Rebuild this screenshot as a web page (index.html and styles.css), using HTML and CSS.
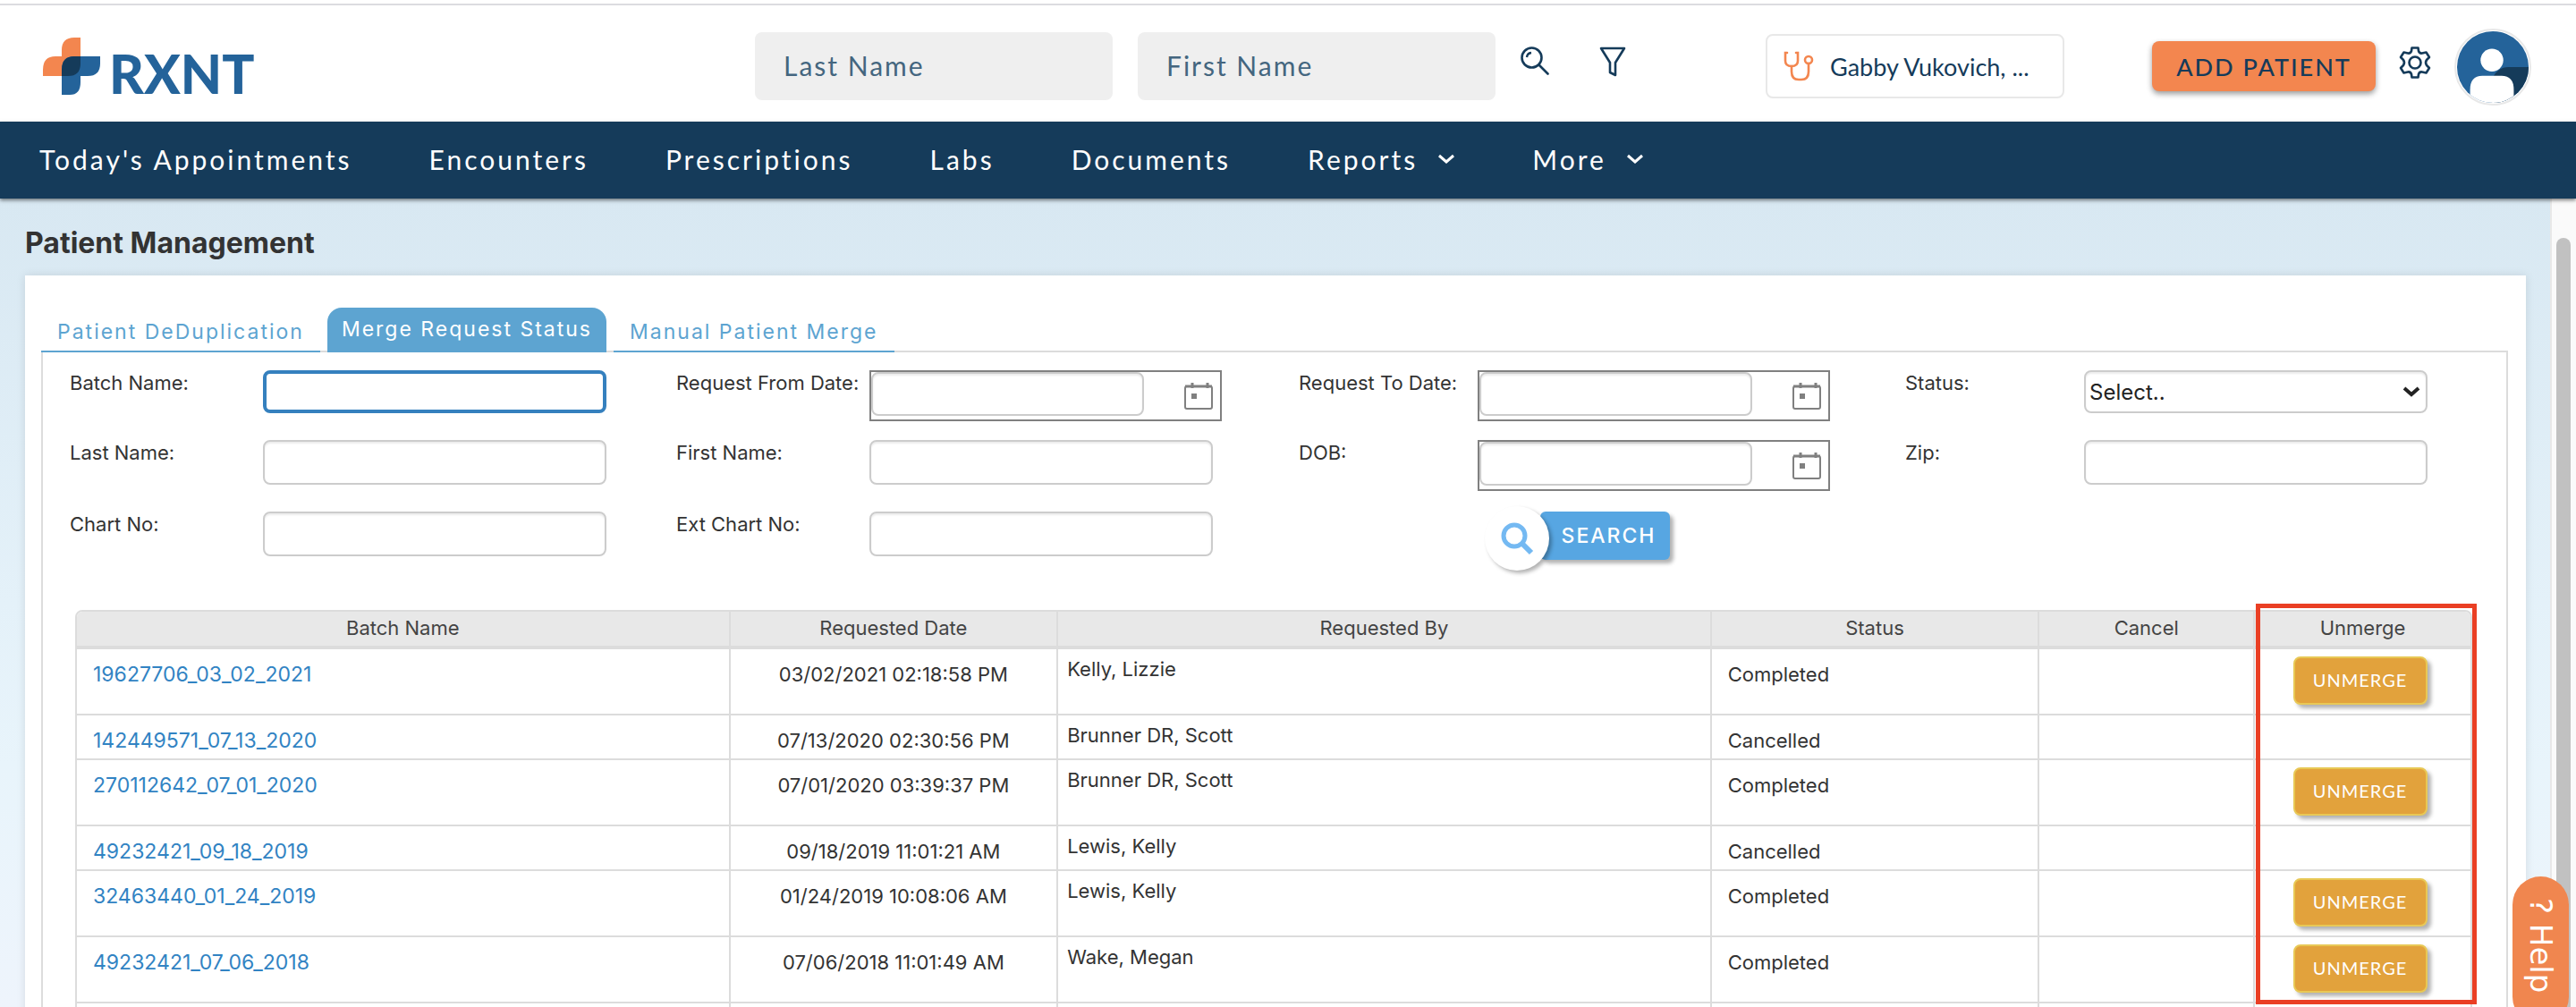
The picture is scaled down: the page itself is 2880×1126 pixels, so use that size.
FILE: index.html
```html
<!DOCTYPE html>
<html lang="en">
<head>
  <meta charset="UTF-8" />
  <meta name="viewport" content="width=device-width, initial-scale=1.0"/>
  <title>Patient Management</title>
  <link rel="stylesheet" href="styles.css">
</head>
<body>
  <!-- Top bar -->
  <header class="topbar">
    <a class="logo" href="#" aria-label="RXNT home">
      <svg class="logo-mark" viewBox="0 0 64 64">
        <path d="M21 21V14Q21 0 35 0H42V29Q42 43 28 43H0V36Q0 21 14 21Z" fill="#f3864f"/>
        <path d="M64 21V29Q64 43 50 43H42V50Q42 64 30 64H21V36Q21 21 35 21Z" fill="#24639a"/>
        <path d="M42 21V29Q42 43 28 43H21V36Q21 21 35 21Z" fill="#153b5a"/>
      </svg>
      <span class="logo-text">RXNT</span>
    </a>

    <form class="quick-search">
      <input type="text" placeholder="Last Name" aria-label="Last Name" />
      <input type="text" placeholder="First Name" aria-label="First Name" />
      <button type="button" class="icon-button" aria-label="Search">
        <svg width="32" height="32" viewBox="0 0 32 32" fill="none" stroke="#153b5a" stroke-width="2.6">
          <circle cx="12.5" cy="12.5" r="11"/>
          <path d="M20.5 20.5L30.5 30.5" stroke-linecap="round"/>
          <path d="M7 12Q7.500 7.500 12 7" stroke-width="2.4"/>
        </svg>
      </button>
      <button type="button" class="icon-button" aria-label="Filter">
        <svg width="30" height="34" viewBox="0 0 30 34" fill="none" stroke="#153b5a" stroke-width="2.6" stroke-linejoin="round">
          <path d="M2 2H28L18 18V32L12 29V18Z"/>
        </svg>
      </button>
    </form>

    <button type="button" class="provider">
      <svg width="34" height="34" viewBox="0 0 34 34" fill="none" stroke="#f3864f" stroke-width="2.6" stroke-linecap="round">
        <path d="M4 2H2V11Q2 17 9 17T16 11V2H14"/>
        <path d="M9 17V23Q9 32 17 32H20Q28 32 28 23V14"/>
        <circle cx="28" cy="10" r="4"/>
      </svg>
      <span>Gabby Vukovich, ...</span>
    </button>

    <button type="button" class="add-patient">ADD PATIENT</button>

    <button type="button" class="icon-button gear" aria-label="Settings">
      <svg width="36" height="36" viewBox="0 0 36 36" fill="none" stroke="#153b5a" stroke-width="2.6" stroke-linejoin="round">
        <path d="M14.500 1.500H21.500L22 5Q23 8 26 7.500L30.500 6.500L34 12L31 15Q29 18 31 21L34 24L30.500 29.500L26 28.500Q23 28 22 31L21.500 34.500H14.500L14 31Q13 28 10 28.500L5.500 29.500L2 24L5 21Q7 18 5 15L2 12L5.500 6.500L10 7.500Q13 8 14 5Z"/>
        <circle cx="18" cy="18" r="6.500"/>
      </svg>
    </button>

    <a class="avatar" href="#" aria-label="My account">
      <svg viewBox="0 0 84 84">
        <defs><clipPath id="face"><circle cx="42" cy="42" r="41"/></clipPath></defs>
        <g clip-path="url(#face)">
          <rect width="84" height="84" fill="#24639a"/>
          <path d="M40 58Q46 42 60 42H84V84H40Z" fill="#153b5a"/>
          <path d="M16 84V68Q16 52 30 52H52Q66 52 66 68V84Z" fill="#fff"/>
          <circle cx="41" cy="34" r="13" fill="#fff"/>
        </g>
      </svg>
    </a>
  </header>

  <!-- Main navigation -->
  <nav class="mainnav">
    <a href="#">Today's Appointments</a>
    <a href="#">Encounters</a>
    <a href="#">Prescriptions</a>
    <a href="#">Labs</a>
    <a href="#">Documents</a>
    <a href="#">Reports
      <svg class="chevron" viewBox="0 0 20 12"><path d="M2 2L10 9L18 2"/></svg>
    </a>
    <a href="#">More
      <svg class="chevron" viewBox="0 0 20 12"><path d="M2 2L10 9L18 2"/></svg>
    </a>
  </nav>

  <div class="page">
    <main class="content">
      <h1>Patient Management</h1>

      <section class="panel">
        <div class="tabs">
          <button type="button" class="tab">Patient DeDuplication</button>
          <button type="button" class="tab active">Merge Request Status</button>
          <button type="button" class="tab">Manual Patient Merge</button>
        </div>

        <div class="tab-body">
          <!-- Search form -->
          <form class="filters">
            <div class="field">
              <label for="batchName">Batch Name:</label>
              <input type="text" id="batchName" class="focused" />
            </div>
            <div class="field">
              <label for="fromDate">Request From Date:</label>
              <span class="date-box">
                <input type="text" id="fromDate" />
                <svg class="calendar" viewBox="0 0 32 32"><path d="M3 6H29Q31 6 31 8V29Q31 31 29 31H3Q1 31 1 29V8Q1 6 3 6Z"/><path d="M1 6H31M9 2V8M26 2V8" class="thick"/><rect x="8" y="14" width="6" height="6"/></svg>
              </span>
            </div>
            <div class="field narrow">
              <label for="toDate">Request To Date:</label>
              <span class="date-box">
                <input type="text" id="toDate" />
                <svg class="calendar" viewBox="0 0 32 32"><path d="M3 6H29Q31 6 31 8V29Q31 31 29 31H3Q1 31 1 29V8Q1 6 3 6Z"/><path d="M1 6H31M9 2V8M26 2V8" class="thick"/><rect x="8" y="14" width="6" height="6"/></svg>
              </span>
            </div>
            <div class="field narrow">
              <label for="status">Status:</label>
              <span class="select-box">
                <select id="status">
                  <option>Select..</option>
                </select>
                <svg class="select-arrow" viewBox="0 0 20 12"><path d="M2 2L10 9L18 2"/></svg>
              </span>
            </div>

            <div class="field">
              <label for="lastName">Last Name:</label>
              <input type="text" id="lastName" />
            </div>
            <div class="field">
              <label for="firstName">First Name:</label>
              <input type="text" id="firstName" />
            </div>
            <div class="field narrow">
              <label for="dob">DOB:</label>
              <span class="date-box">
                <input type="text" id="dob" />
                <svg class="calendar" viewBox="0 0 32 32"><path d="M3 6H29Q31 6 31 8V29Q31 31 29 31H3Q1 31 1 29V8Q1 6 3 6Z"/><path d="M1 6H31M9 2V8M26 2V8" class="thick"/><rect x="8" y="14" width="6" height="6"/></svg>
              </span>
            </div>
            <div class="field narrow">
              <label for="zip">Zip:</label>
              <input type="text" id="zip" />
            </div>

            <div class="field">
              <label for="chartNo">Chart No:</label>
              <input type="text" id="chartNo" />
            </div>
            <div class="field">
              <label for="extChartNo">Ext Chart No:</label>
              <input type="text" id="extChartNo" />
            </div>
            <div class="field search-cell">
              <button type="button" class="search-button">
                <span class="search-circle">
                  <svg width="38" height="38" viewBox="0 0 38 38" fill="none" stroke="#74b9f2" stroke-width="5">
                    <circle cx="16" cy="16" r="12"/>
                    <path d="M25 25L35 35" stroke-width="6"/>
                  </svg>
                </span>
                SEARCH
              </button>
            </div>
          </form>

          <!-- Results -->
          <div class="results">
            <table>
              <thead>
                <tr>
                  <th class="wide">Batch Name</th>
                  <th class="medium">Requested Date</th>
                  <th class="wide">Requested By</th>
                  <th class="medium">Status</th>
                  <th>Cancel</th>
                  <th>Unmerge</th>
                </tr>
              </thead>
              <tbody>
                <tr>
                  <td><a href="#">19627706_03_02_2021</a></td>
                  <td class="date">03/02/2021 02:18:58 PM</td>
                  <td class="by">Kelly, Lizzie</td>
                  <td>Completed</td>
                  <td></td>
                  <td class="action"><button type="button" class="unmerge">UNMERGE</button></td>
                </tr>
                <tr>
                  <td><a href="#">142449571_07_13_2020</a></td>
                  <td class="date">07/13/2020 02:30:56 PM</td>
                  <td class="by">Brunner DR, Scott</td>
                  <td>Cancelled</td>
                  <td></td>
                  <td class="action"></td>
                </tr>
                <tr>
                  <td><a href="#">270112642_07_01_2020</a></td>
                  <td class="date">07/01/2020 03:39:37 PM</td>
                  <td class="by">Brunner DR, Scott</td>
                  <td>Completed</td>
                  <td></td>
                  <td class="action"><button type="button" class="unmerge">UNMERGE</button></td>
                </tr>
                <tr>
                  <td><a href="#">49232421_09_18_2019</a></td>
                  <td class="date">09/18/2019 11:01:21 AM</td>
                  <td class="by">Lewis, Kelly</td>
                  <td>Cancelled</td>
                  <td></td>
                  <td class="action"></td>
                </tr>
                <tr>
                  <td><a href="#">32463440_01_24_2019</a></td>
                  <td class="date">01/24/2019 10:08:06 AM</td>
                  <td class="by">Lewis, Kelly</td>
                  <td>Completed</td>
                  <td></td>
                  <td class="action"><button type="button" class="unmerge">UNMERGE</button></td>
                </tr>
                <tr>
                  <td><a href="#">49232421_07_06_2018</a></td>
                  <td class="date">07/06/2018 11:01:49 AM</td>
                  <td class="by">Wake, Megan</td>
                  <td>Completed</td>
                  <td></td>
                  <td class="action"><button type="button" class="unmerge">UNMERGE</button></td>
                </tr>
                <tr>
                  <td></td>
                  <td></td>
                  <td></td>
                  <td></td>
                  <td></td>
                  <td></td>
                </tr>
              </tbody>
            </table>
            <div class="highlight"></div>
          </div>
        </div>
      </section>
    </main>
    <div class="scrollbar"><div class="thumb"></div></div>
  </div>

  <button type="button" class="help">? Help</button>
</body>
</html>
```
FILE: styles.css
```css
* {
  box-sizing: border-box;
}
body {
  margin: 0;
  height: 100vh;
  display: flex;
  flex-direction: column;
  overflow: hidden;
  font-family: Inter, "Liberation Sans", sans-serif;
  font-size: 22px;
  line-height: 30px;
  color: #333;
  background-color: #fff;
}
button, input, select {
  font-family: inherit;
}
button {
  padding: 0;
  border: none;
  background: none;
  cursor: pointer;
}
svg {
  display: block;
  flex: none;
}

/* top bar */
.topbar {
  display: flex;
  align-items: flex-start;
  flex: none;
  height: 132px;
  margin-top: 4px;
  padding: 30px 50px 0 48px;
  border-top: 2px solid #dcdce0;
  font-family: Lato, sans-serif;
}
.logo {
  display: flex;
  align-items: flex-end;
  gap: 10px;
  margin-top: 6px;
  text-decoration: none;
}
.logo-mark {
  width: 64px;
  height: 64px;
}
.logo-text {
  font-size: 60px;
  font-weight: 900;
  line-height: 48px;
  color: #24639a;
}
.quick-search {
  display: flex;
  align-items: flex-start;
  margin: 0 0 0 auto;
}
.quick-search input {
  width: 400px;
  height: 76px;
  margin-right: 28px;
  padding: 0 32px 2px;
  border: none;
  border-radius: 8px;
  background-color: #efefef;
  font-size: 30px;
  letter-spacing: 2px;
}
.quick-search input::placeholder {
  color: #44667f;
}
.icon-button {
  margin-top: 16px;
}
.icon-button + .icon-button {
  margin-left: 56px;
}
.provider {
  display: flex;
  align-items: center;
  gap: 18px;
  width: 334px;
  height: 72px;
  margin: 2px 98px 0 156px;
  padding: 0 18px;
  border: 2px solid #e8e8e8;
  border-radius: 8px;
  font-size: 27px;
  color: #153b5a;
}
.add-patient {
  width: 250px;
  height: 56px;
  margin-top: 10px;
  border-radius: 8px;
  background-color: #f3864f;
  box-shadow: 0 3px 6px rgba(0, 0, 0, 0.4);
  font-size: 27px;
  font-weight: 500;
  letter-spacing: 2px;
  color: #153b5a;
}
.gear {
  margin-left: 26px;
}
.avatar {
  width: 86px;
  height: 86px;
  margin: -4px 0 0 26px;
  border: 2px solid #e8e8e8;
  border-radius: 50%;
}

/* navigation */
.mainnav {
  position: relative;
  display: flex;
  align-items: center;
  flex: none;
  gap: 86px;
  height: 86px;
  padding: 0 44px 2px;
  background-color: #153b5a;
  box-shadow: 0 2px 4px rgba(0, 0, 0, 0.5);
  font-family: Lato, sans-serif;
  font-size: 30px;
  letter-spacing: 3px;
}
.mainnav a {
  display: flex;
  align-items: center;
  gap: 22px;
  color: #fff;
  text-decoration: none;
}
.chevron, .select-arrow {
  width: 20px;
  height: 12px;
  fill: none;
  stroke: #fff;
  stroke-width: 3;
}

/* page */
.page {
  display: flex;
  flex: 1;
  min-height: 0;
  background: linear-gradient(#d8e8f2, #e4f1f9 50%, #e8f4fb 70%, #eef4fc);
}
.content {
  flex: 1;
  overflow: hidden;
  padding: 30px 27px 0 28px;
}
h1 {
  margin: 0 0 16px;
  font-size: 32px;
  line-height: 40px;
  font-weight: 700;
}
.panel {
  padding: 36px 20px 0 18px;
  background-color: #fff;
  box-shadow: 0 0 10px rgba(0, 0, 0, 0.1);
}
.tabs {
  display: flex;
  align-items: flex-end;
  gap: 8px;
  height: 50px;
  box-shadow: inset 0 -2px #dcdcdc;
}
.tab {
  height: 44px;
  padding: 0 18px;
  border-bottom: 2px solid #5da4d1;
  font-size: 23px;
  letter-spacing: 2px;
  color: #5da4d1;
}
.tab.active {
  height: 50px;
  padding: 0 16px;
  border-radius: 16px 16px 0 0;
  background-color: #5da4d1;
  color: #fff;
}
.tab-body {
  padding-top: 20px;
  border: 2px solid #dcdcdc;
  border-top: none;
}

/* search form */
.filters {
  display: grid;
  grid-template-columns: 678fr 696fr 678fr 584fr;
  grid-template-rows: 78px 80px 110px;
  margin: 0 88px 0 30px;
}
.field {
  display: flex;
  align-items: flex-start;
}
.field label {
  width: 216px;
  flex: none;
  line-height: 28px;
}
.field.narrow label {
  width: 200px;
}
.field input, .field select {
  width: 384px;
  height: 50px;
  padding: 0 8px;
  border: 2px solid #ccc;
  border-radius: 8px;
  background-color: #fff;
  box-shadow: inset 0 2px 2px rgba(0, 0, 0, 0.08);
  font-size: 24px;
}
.field input.focused {
  height: 48px;
  border: 4px solid #3580be;
  box-shadow: none;
}
.date-box {
  display: flex;
  justify-content: space-between;
  width: 394px;
  height: 57px;
  padding-right: 8px;
  border: 2px solid #808080;
}
.field .date-box input {
  width: 305px;
  height: 49px;
}
.calendar {
  width: 32px;
  height: 32px;
  margin-top: 10px;
  fill: none;
  stroke: #808080;
  stroke-width: 2;
}
.calendar .thick {
  stroke-width: 3;
}
.calendar rect {
  fill: #808080;
  stroke: none;
}
.select-box {
  position: relative;
}
.field select {
  appearance: none;
  height: 48px;
  padding: 0 4px;
  color: #222;
}
.select-arrow {
  position: absolute;
  right: 8px;
  top: 18px;
  stroke: #222;
  stroke-width: 4;
}
.search-cell {
  padding-left: 270px;
}
.search-button {
  position: relative;
  width: 145px;
  height: 54px;
  padding: 0 0 0 8px;
  border-radius: 6px;
  background-color: #57a6e2;
  box-shadow: 4px 4px 4px rgba(0, 0, 0, 0.3);
  font-size: 23px;
  font-weight: 500;
  letter-spacing: 2px;
  color: #fff;
}
.search-circle {
  position: absolute;
  left: -62px;
  top: -6px;
  display: flex;
  align-items: center;
  justify-content: center;
  width: 72px;
  height: 72px;
  border-radius: 50%;
  background-color: #fff;
  box-shadow: 3px 3px 4px rgba(0, 0, 0, 0.3);
}

/* results table */
.results {
  position: relative;
  margin: 0 38px 0 36px;
}
table {
  width: 100%;
  table-layout: fixed;
  border-collapse: separate;
  border-spacing: 0;
  border: 2px solid #dcdcdc;
  border-radius: 8px 8px 0 0;
}
th {
  height: 42px;
  padding: 0 0 2px;
  border-right: 2px solid #dcdcdc;
  border-bottom: 4px solid #dcdcdc;
  background-color: #e8e8e8;
  font-weight: 400;
  color: #444;
}
th:first-child {
  border-top-left-radius: 6px;
}
th:last-child {
  border-top-right-radius: 6px;
}
th.wide {
  width: 27.3%;
}
th.medium {
  width: 13.7%;
}
td {
  height: 50px;
  padding: 13px 18px 0;
  border-right: 2px solid #dcdcdc;
  border-bottom: 2px solid #dcdcdc;
  vertical-align: top;
}
th:last-child, td:last-child {
  border-right: none;
}
td a {
  font-size: 23px;
  color: #3183c3;
  text-decoration: none;
}
td.date {
  padding: 13px 0 0;
  text-align: center;
}
td.by {
  padding: 7px 10px 0;
}
td.action {
  padding: 8px 6px 0 0;
  text-align: center;
}
.unmerge {
  display: block;
  width: 150px;
  height: 54px;
  margin: 0 auto 10px;
  padding-bottom: 2px;
  border: 2px solid #e8c855;
  border-radius: 8px;
  background-color: #e2a23c;
  box-shadow: 4px 4px 4px rgba(0, 0, 0, 0.3);
  font-family: Lato, sans-serif;
  font-size: 20px;
  letter-spacing: 1px;
  color: #fff;
}
.highlight {
  position: absolute;
  right: -5px;
  top: -7px;
  width: 247px;
  height: 448px;
  border: 5px solid #ea3f24;
}

/* scrollbar and help */
.scrollbar {
  width: 29px;
  padding: 44px 6px 0 5px;
  border-left: 2px solid #e8e8e8;
  background-color: #fafafa;
}
.thumb {
  height: 100%;
  border-radius: 8px 8px 0 0;
  background-color: #c1c1c1;
}
.help {
  position: fixed;
  right: 8px;
  bottom: -20px;
  width: 63px;
  height: 166px;
  padding-top: 24px;
  border-radius: 32px;
  background-color: #f0864f;
  writing-mode: vertical-rl;
  text-align: start;
  font-family: "DejaVu Sans", sans-serif;
  font-size: 34px;
  color: #fff;
}
```
